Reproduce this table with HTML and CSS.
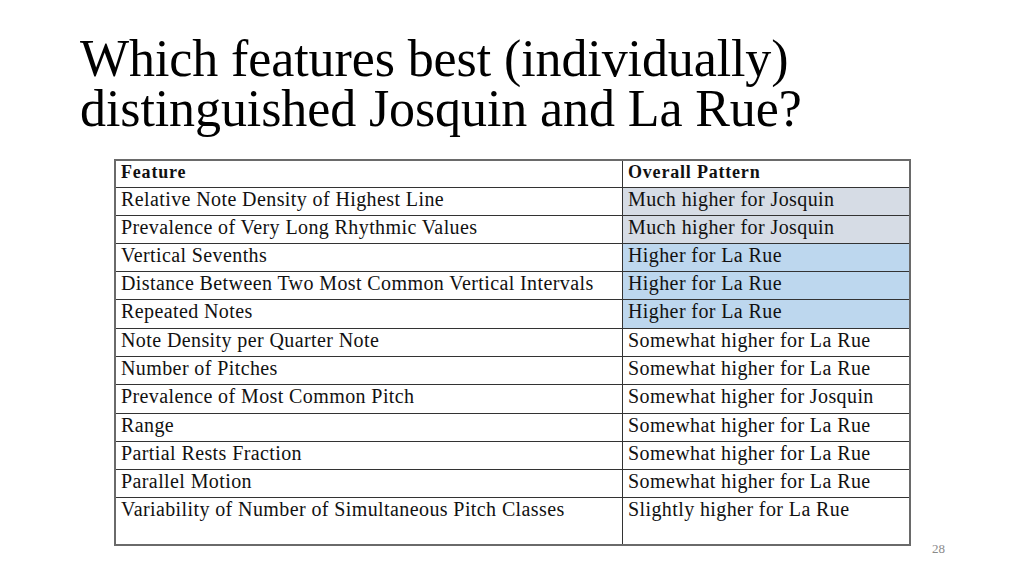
FILE: index.html
```html
<!DOCTYPE html>
<html>
<head>
<meta charset="utf-8">
<link rel="stylesheet" href="styles.css">
</head>
<body>
<div class="slide">
  <h1 class="title">Which features best (individually)<br>distinguished Josquin and La Rue?</h1>
  <table class="features">
    <tr class="r27"><th>Feature</th><th>Overall Pattern</th></tr>
    <tr class="r28"><td>Relative Note Density of Highest Line</td><td class="gray">Much higher for Josquin</td></tr>
    <tr class="r28"><td>Prevalence of Very Long Rhythmic Values</td><td class="gray">Much higher for Josquin</td></tr>
    <tr class="r28"><td>Vertical Sevenths</td><td class="blue">Higher for La Rue</td></tr>
    <tr class="r28"><td>Distance Between Two Most Common Vertical Intervals</td><td class="blue">Higher for La Rue</td></tr>
    <tr class="r29"><td>Repeated Notes</td><td class="blue">Higher for La Rue</td></tr>
    <tr class="r28"><td>Note Density per Quarter Note</td><td>Somewhat higher for La Rue</td></tr>
    <tr class="r28"><td>Number of Pitches</td><td>Somewhat higher for La Rue</td></tr>
    <tr class="r29"><td>Prevalence of Most Common Pitch</td><td>Somewhat higher for Josquin</td></tr>
    <tr class="r28"><td>Range</td><td>Somewhat higher for La Rue</td></tr>
    <tr class="r28"><td>Partial Rests Fraction</td><td>Somewhat higher for La Rue</td></tr>
    <tr class="r28"><td>Parallel Motion</td><td>Somewhat higher for La Rue</td></tr>
    <tr class="rlast"><td>Variability of Number of Simultaneous Pitch Classes</td><td>Slightly higher for La Rue</td></tr>
  </table>
  <div class="pagenum">28</div>
</div>
</body>
</html>
```

FILE: styles.css
```css
html, body {
  margin: 0;
  padding: 0;
  background: #ffffff;
}
.slide {
  position: relative;
  width: 1024px;
  height: 576px;
  overflow: hidden;
  font-family: "Liberation Serif", "DejaVu Serif", serif;
  color: #111;
}
.title {
  margin: 0;
  padding: 34px 0 0 80px;
  font-weight: normal;
  font-size: 52px;
  line-height: 50px;
  letter-spacing: -0.1px;
  color: #000;
}
.features {
  margin: 25px 0 0 114px;
  border-collapse: collapse;
  border: 2px solid #6a6a6a;
  font-size: 20px;
  letter-spacing: 0.4px;
}
.features th, .features td {
  text-align: left;
  vertical-align: top;
  padding: 0 6px 0 5px;
  border-top: 1px solid #333;
  border-bottom: 1px solid #333;
  line-height: 23px;
}
.features th {
  font-weight: bold;
  font-size: 18px;
  letter-spacing: 0.8px;
}
.features td:first-child, .features th:first-child {
  width: 495px;
  border-right: 1px solid #333;
}
.features td:last-child, .features th:last-child {
  width: 275px;
}
.features .gray { background: #d6dce5; }
.features .blue { background: #bdd7ee; }
.r27 { height: 27px; }
.r28 { height: 28px; }
.r29 { height: 29px; }
.rlast { height: 48px; }
.pagenum {
  position: absolute;
  left: 932px;
  top: 541px;
  font-size: 13px;
  color: #8a8a8a;
}
```
